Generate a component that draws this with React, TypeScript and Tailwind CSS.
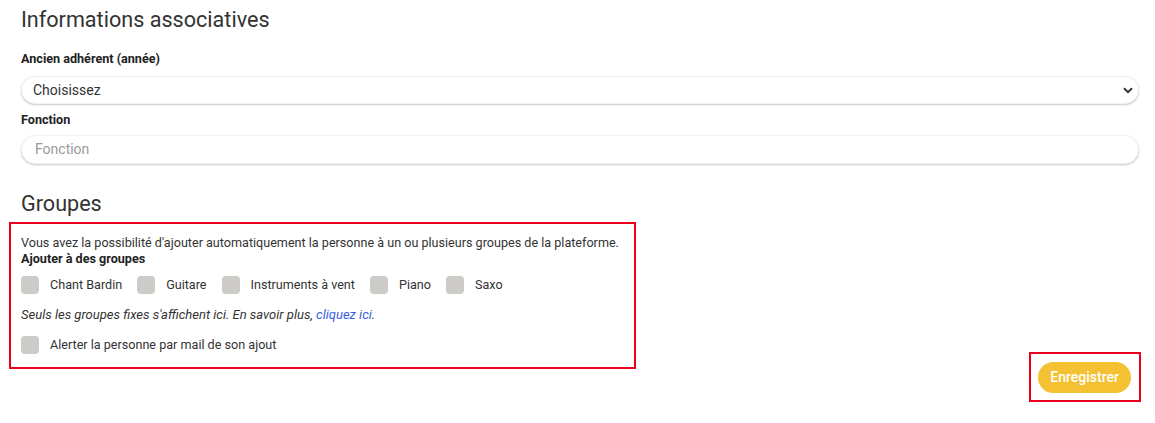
import React from 'react'

const groupes = ['Chant Bardin', 'Guitare', 'Instruments à vent', 'Piano', 'Saxo']

function Checkbox({ label }: { label: string }) {
  return (
    <label className="flex items-center gap-[11px] mr-[15px]">
      <span className="w-[18px] h-[18px] rounded-[4px] bg-[#cdcbc8] shrink-0"></span>
      <span className="text-[12.6px] text-[#333]">{label}</span>
    </label>
  )
}

export default function App() {
  return (
    <div className="bg-white min-h-[423px] pl-[21px] pr-[16px] pt-[4px] text-[#333]" style={{ fontFamily: 'Roboto, "Open Sans", sans-serif' }}>
      <h2 className="text-[21.6px] leading-8 font-normal text-[#333]">Informations associatives</h2>

      <div className="mt-[15px] text-[12.6px] leading-4 font-bold text-[#222]">Ancien adhérent (année)</div>
      <div className="mt-[9px] h-[28px] rounded-full bg-white shadow-[0_1px_2px_rgba(0,0,0,0.22)] border border-[#f2f2f2] flex items-center justify-between pl-[11px] pr-[5px]">
        <span className="text-[14px] text-[#333]">Choisissez</span>
        <svg width="10" height="7" viewBox="0 0 10 7" fill="none">
          <path d="M1 1.2 5 5.2 9 1.2" stroke="#333" strokeWidth="2" />
        </svg>
      </div>

      <div className="mt-[8px] text-[12.6px] leading-4 font-bold text-[#222]">Fonction</div>
      <div className="mt-[7px] h-[29px] rounded-full bg-white shadow-[0_1px_2px_rgba(0,0,0,0.22)] border border-[#f2f2f2] flex items-center pl-[13px]">
        <span className="text-[14px] text-[#9a9a9a]">Fonction</span>
      </div>

      <h2 className="mt-[24px] text-[21.6px] leading-8 font-normal text-[#333]">Groupes</h2>

      <div className="mt-[2px] -ml-[12px] w-[627px] border-2 border-[#e8001c] pl-[10px] pt-[11px] pb-[12px]">
        <p className="text-[12.6px] leading-4 text-[#333]">
          Vous avez la possibilité d'ajouter automatiquement la personne à un ou plusieurs groupes de la plateforme.
        </p>
        <p className="text-[12.6px] leading-4 font-bold text-[#222]">Ajouter à des groupes</p>
        <div className="mt-[9px] flex items-center">
          {groupes.map((g) => (
            <Checkbox key={g} label={g} />
          ))}
        </div>
        <p className="mt-[12px] text-[13px] leading-4 italic text-[#333]">
          Seuls les groupes fixes s'affichent ici. En savoir plus, <a href="#" className="text-[#3a5ee0]">cliquez ici</a>.
        </p>
        <div className="mt-[13px] flex">
          <Checkbox label="Alerter la personne par mail de son ajout" />
        </div>
      </div>

      <div className="-mt-[17px] flex justify-end -mr-[2px]">
        <div className="border-2 border-[#e8001c] pl-[7px] pr-[8px] pt-[8px] pb-[7px]">
          <button className="h-[31px] px-[12px] rounded-full bg-[#f4c132] text-white text-[14px] font-medium">
            Enregistrer
          </button>
        </div>
      </div>
    </div>
  )
}
